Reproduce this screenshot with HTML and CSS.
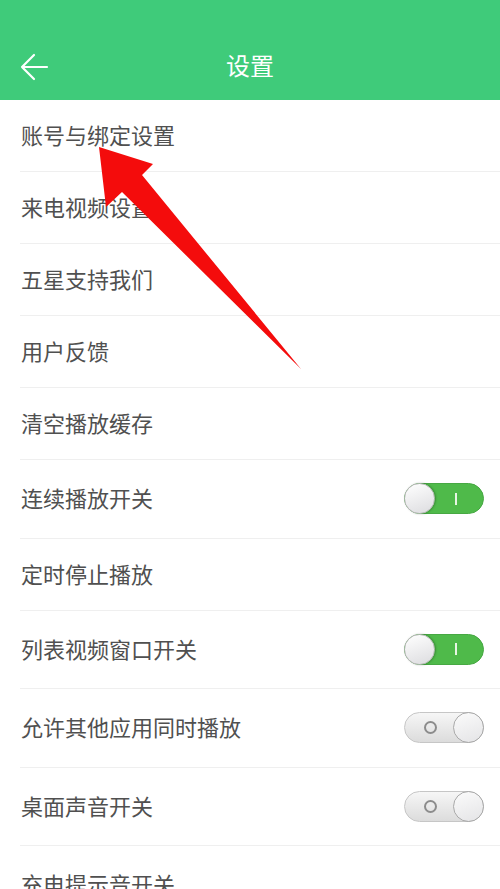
FILE: index.html
```html
<!DOCTYPE html>
<html lang="zh">
<head>
<meta charset="utf-8">
<title>设置</title>
<link rel="stylesheet" href="styles.css">
</head>
<body>
<div class="page">
  <header class="topbar">
    <div class="bar">
      <svg class="back" width="30" height="28" viewBox="0 0 30 28">
        <path d="M28 14H3M15 2L3 14l12 12" fill="none" stroke="#fff" stroke-width="2.2" stroke-linecap="round" stroke-linejoin="round"/>
      </svg>
      <h1 class="title">设置</h1>
    </div>
  </header>
  <ul class="list">
    <li class="row">账号与绑定设置</li>
    <li class="row">来电视频设置</li>
    <li class="row">五星支持我们</li>
    <li class="row">用户反馈</li>
    <li class="row">清空播放缓存</li>
    <li class="row tall">连续播放开关<span class="switch on"><span class="knob"></span><span class="mark"></span></span></li>
    <li class="row">定时停止播放</li>
    <li class="row tall">列表视频窗口开关<span class="switch on"><span class="knob"></span><span class="mark"></span></span></li>
    <li class="row tall">允许其他应用同时播放<span class="switch off"><span class="mark"></span><span class="knob"></span></span></li>
    <li class="row tall">桌面声音开关<span class="switch off"><span class="mark"></span><span class="knob"></span></span></li>
    <li class="row tall">充电提示音开关</li>
  </ul>
  <svg class="pointer" width="500" height="400" viewBox="0 0 500 400">
    <polygon points="99,147 153,164 142,175 301,369 122,192 106,207" fill="#f40c0c"/>
  </svg>
</div>
</body>
</html>
```
FILE: styles.css
```css
html, body {
  margin: 0;
  padding: 0;
  background: #fff;
}
body {
  font-family: "Noto Sans CJK SC", "Noto Sans", sans-serif;
  overflow: hidden;
}
.page {
  position: relative;
  width: 500px;
  height: 889px;
  overflow: hidden;
}
.topbar {
  background: #3fcb7a;
  height: 100px;
  padding-top: 34px;
  box-sizing: border-box;
}
.bar {
  height: 66px;
  padding-bottom: 4px;
  box-sizing: border-box;
  display: flex;
  align-items: center;
  justify-content: center;
  position: relative;
}
.back {
  position: absolute;
  left: 19px;
  top: 19px;
}
.title {
  margin: 0;
  color: #fff;
  font-size: 24px;
  font-weight: normal;
  line-height: 1;
}
.list {
  list-style: none;
  margin: 0;
  padding: 0;
}
.row {
  margin-left: 20px;
  padding-left: 1px;
  padding-right: 16px;
  padding-bottom: 3px;
  box-sizing: content-box;
  height: 68px;
  border-bottom: 1px solid #efefef;
  display: flex;
  align-items: center;
  justify-content: space-between;
  font-size: 22px;
  color: #505050;
  line-height: 1;
}
.row.tall {
  height: 74.5px;
}
.switch {
  width: 80px;
  height: 31px;
  box-sizing: border-box;
  border-radius: 16px;
  display: flex;
  align-items: center;
  margin-top: 3px;
}
.switch.on {
  background: #4fba4a;
  border: 1px solid #47a843;
}
.switch.off {
  background: linear-gradient(#f6f6f6, #dcdcdc);
  border: 1px solid #c6c6c6;
}
.knob {
  width: 31px;
  height: 31px;
  box-sizing: border-box;
  border-radius: 50%;
  background: linear-gradient(160deg, #ffffff, #dcdcdf);
  border: 1px solid #b9b9b9;
  flex: none;
}
.switch.on .knob {
  margin-left: -1px;
  box-shadow: 1px 0 2px rgba(0,0,0,0.25);
}
.switch.off .knob {
  margin-right: -1px;
  margin-left: auto;
  background: linear-gradient(160deg, #fbfbfb, #e4e4e6);
  border-color: #a9a9a9;
}
.switch.on .mark {
  width: 2px;
  height: 12px;
  background: #e8f6e4;
  margin-left: 20px;
}
.switch.off .mark {
  width: 13px;
  height: 13px;
  box-sizing: border-box;
  border-radius: 50%;
  border: 2px solid #8c8c8c;
  margin-left: 19px;
}
.pointer {
  position: absolute;
  left: 0;
  top: 0;
  pointer-events: none;
}
```
